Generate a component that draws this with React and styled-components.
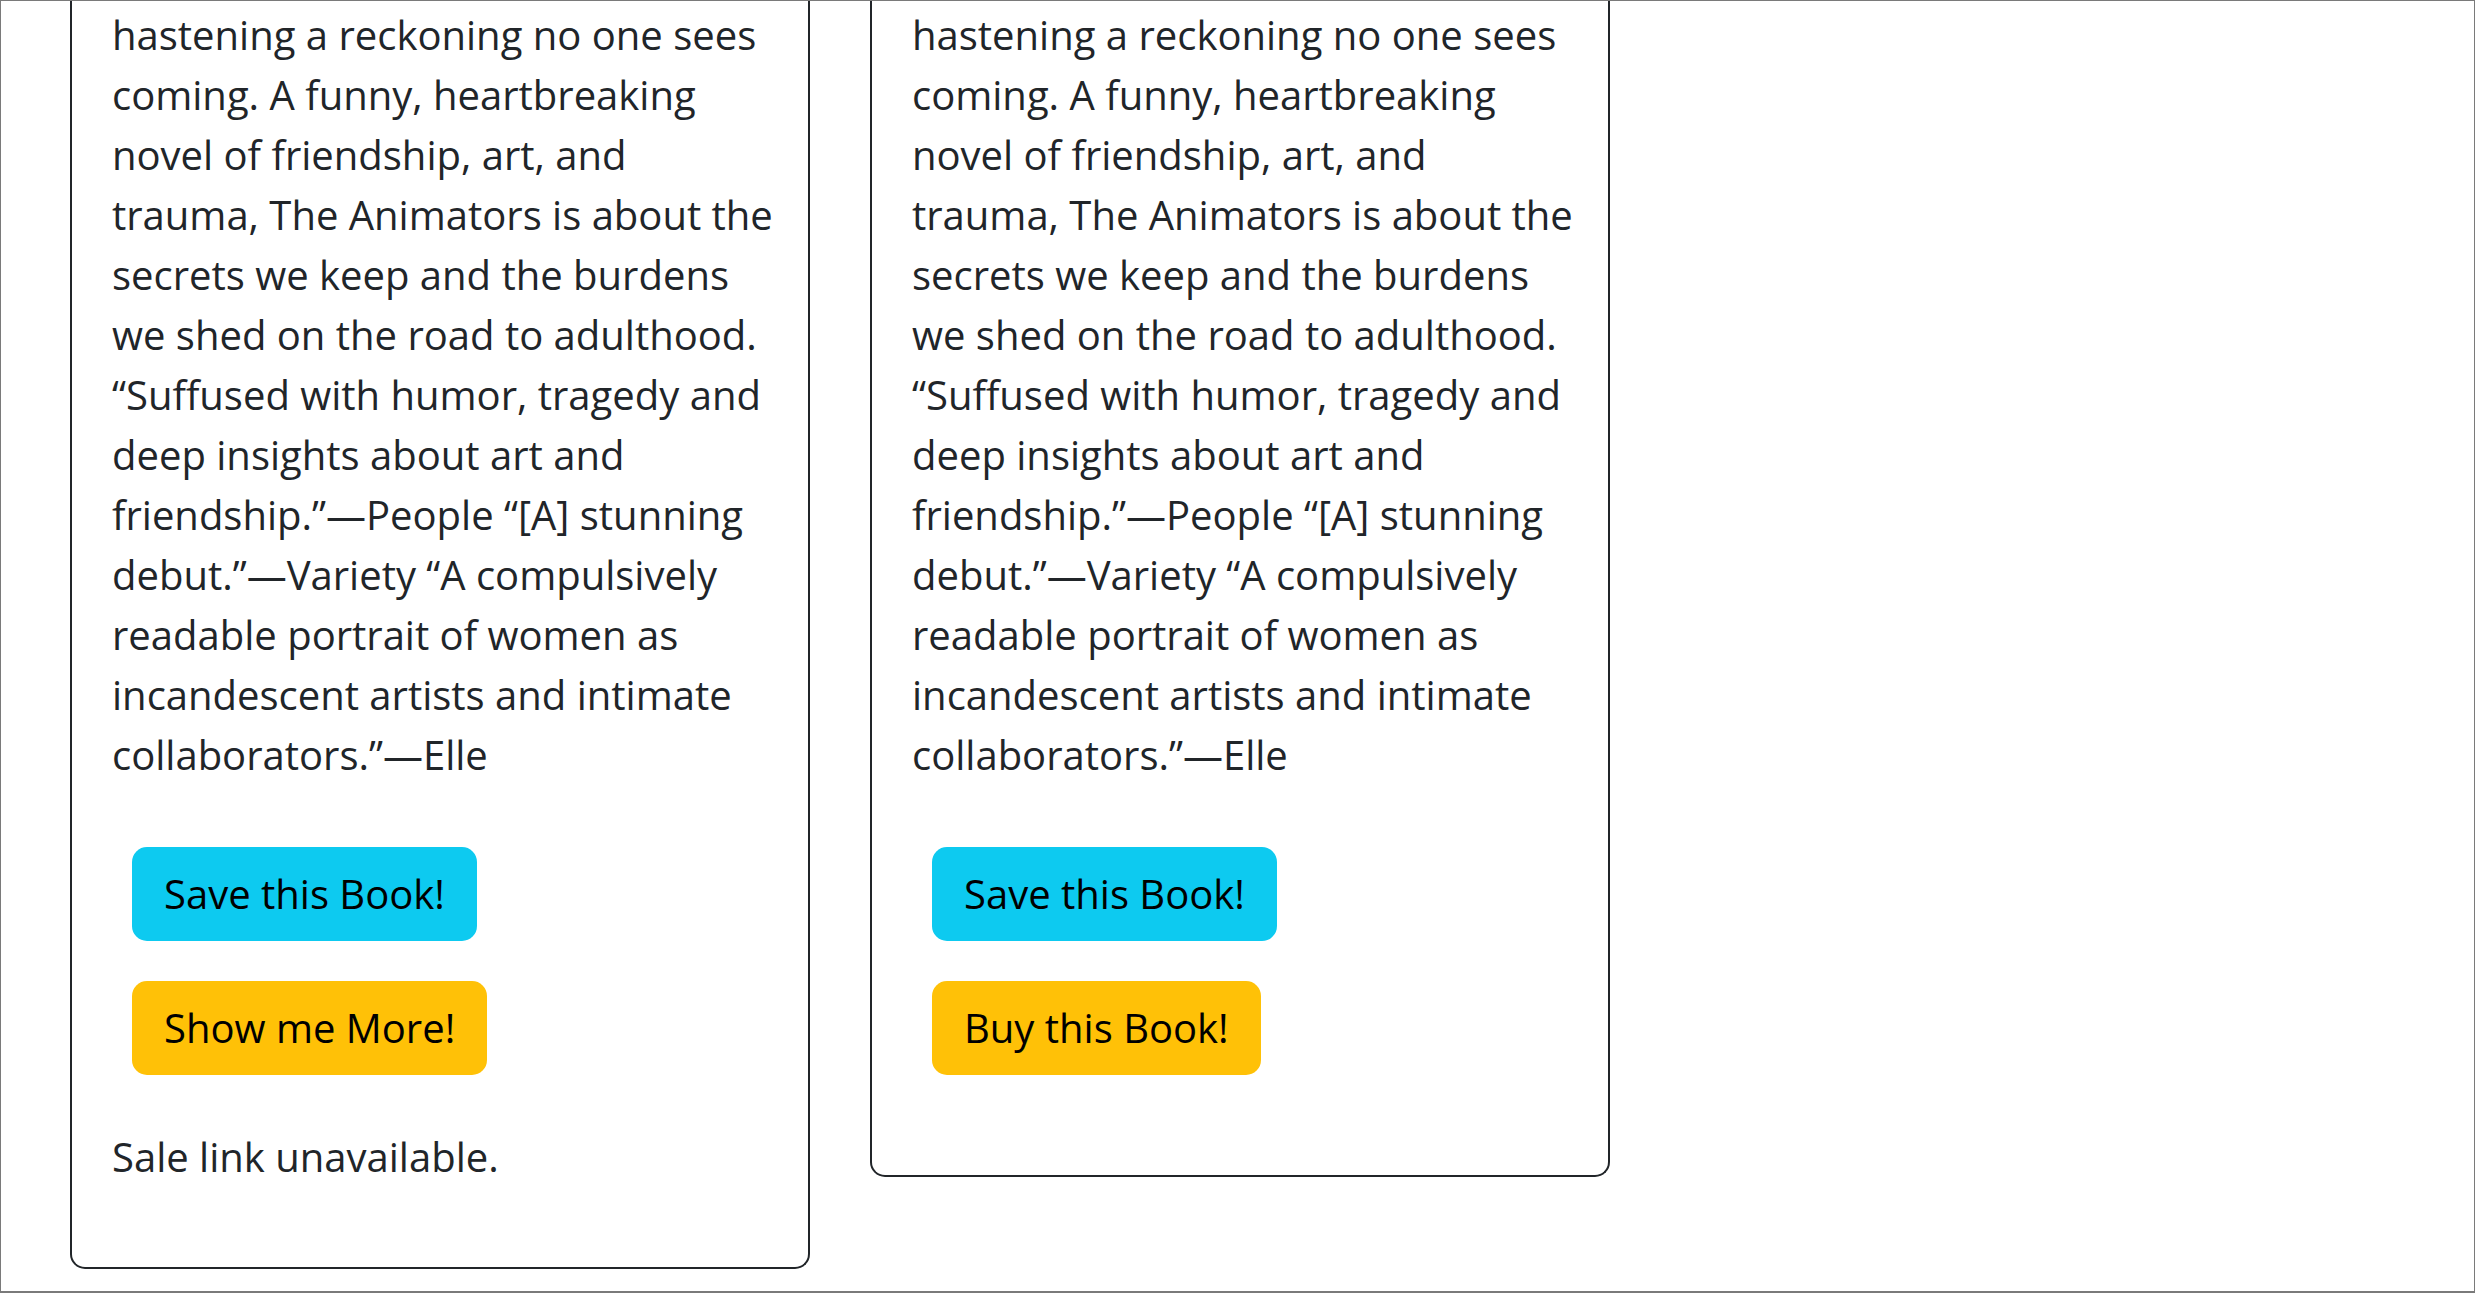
import styled, { createGlobalStyle } from "styled-components";

const GlobalStyle = createGlobalStyle`
  * {
    box-sizing: border-box;
  }

  body {
    margin: 0;
    background: #fff;
    color: #212529;
    font-family: "Open Sans", "Liberation Sans", sans-serif;
    font-size: 40px;
    line-height: 60px;
  }
`;

const Page = styled.div`
  height: 100vh;
  overflow: hidden;
  border: 1px solid #7a7a7a;
  border-bottom-width: 2px;
  padding-left: 69px;
`;

const CardRow = styled.div`
  display: flex;
  align-items: flex-start;
  gap: 60px;
`;

const Card = styled.div`
  width: 740px;
  border: 2px solid #212529;
  border-top: none;
  border-radius: 0 0 15px 15px;
  padding: 6px 40px 40px;
`;

const Description = styled.p`
  margin: -2px 0 42px;
  white-space: nowrap;
`;

const ButtonStack = styled.div`
  display: flex;
  flex-direction: column;
  align-items: flex-start;
  gap: 40px;
  padding: 20px;
  margin-bottom: ${(p) => p.$tail}px;
`;

const Button = styled.button`
  font-family: inherit;
  font-size: 40px;
  line-height: 60px;
  color: #000;
  background: ${(p) => (p.$variant === "warning" ? "#ffc107" : "#0dcaf0")};
  border: 2px solid transparent;
  border-radius: 15px;
  padding: 15px 30px;
  cursor: pointer;
`;

const Note = styled.p`
  margin: 0 0 40px;
`;

const blurb = [
  "hastening a reckoning no one sees",
  "coming. A funny, heartbreaking",
  "novel of friendship, art, and",
  "trauma, The Animators is about the",
  "secrets we keep and the burdens",
  "we shed on the road to adulthood.",
  "\u201cSuffused with humor, tragedy and",
  "deep insights about art and",
  "friendship.\u201d\u2014People \u201c[A] stunning",
  "debut.\u201d\u2014Variety \u201cA compulsively",
  "readable portrait of women as",
  "incandescent artists and intimate",
  "collaborators.\u201d\u2014Elle",
];

const books = [
  { id: 1, second: "Show me More!", saleLink: null },
  { id: 2, second: "Buy this Book!", saleLink: "#" },
];

function BookCard({ book }) {
  return (
    <Card>
      <Description>
        {blurb.map((line, i) => (
          <span key={i}>
            {line}
            {i < blurb.length - 1 && <br />}
          </span>
        ))}
      </Description>
      <ButtonStack $tail={book.saleLink ? 40 : 32}>
        <Button $variant="info">Save this Book!</Button>
        <Button $variant="warning">{book.second}</Button>
      </ButtonStack>
      {!book.saleLink && <Note>Sale link unavailable.</Note>}
    </Card>
  );
}

export default function App() {
  return (
    <>
      <GlobalStyle />
      <Page>
        <CardRow>
          {books.map((book) => (
            <BookCard key={book.id} book={book} />
          ))}
        </CardRow>
      </Page>
    </>
  );
}
